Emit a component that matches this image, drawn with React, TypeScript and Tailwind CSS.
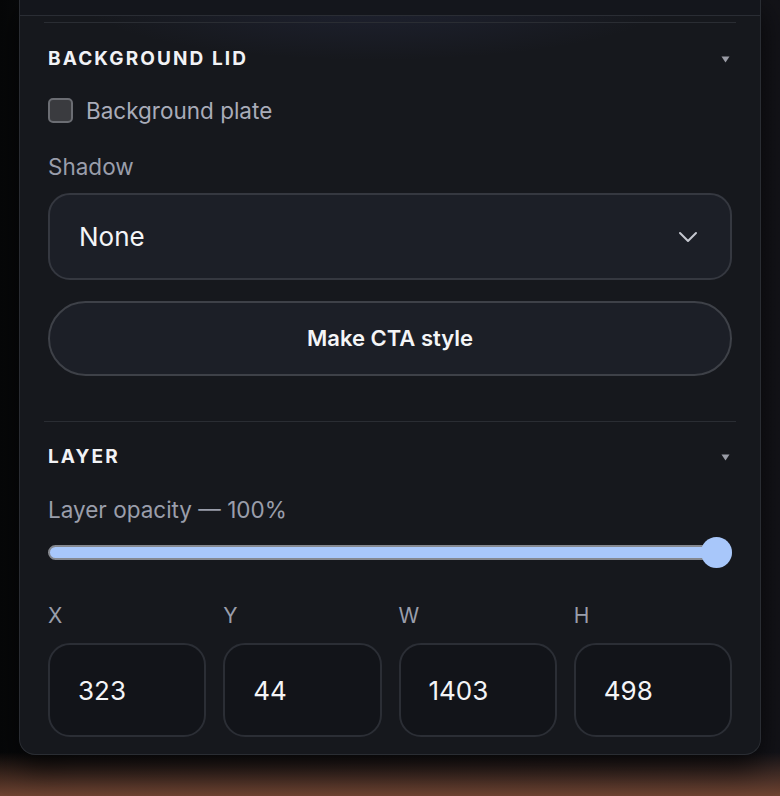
import { ChevronDown } from "lucide-react";

const font = { fontFamily: "Inter, 'Noto Sans', sans-serif" };

function SectionHeader({ title }: { title: string }) {
  return (
    <div className="flex h-[24px] items-center justify-between">
      <h3 className="text-[19px] font-bold uppercase leading-[24px] tracking-[0.11em] text-[#f1f2f5]">
        {title}
      </h3>
      <svg width="9" height="7" viewBox="0 0 9 7" className="mr-[2px]">
        <path d="M0.5 0.5h8L4.5 6.5z" fill="#9a9ca6" />
      </svg>
    </div>
  );
}

function NumberField({ label, value }: { label: string; value: string }) {
  return (
    <div className="flex flex-col">
      <span className="text-[21px] leading-[28px] text-[#9a9eab]">{label}</span>
      <div className="mt-[13px] flex h-[94px] items-center rounded-[22px] border-2 border-[#2b2e35] bg-[#121419] px-[28px] text-[26px] text-[#f4f5f7]">
        {value}
      </div>
    </div>
  );
}

export default function App() {
  return (
    <div
      style={font}
      className="h-[796px] w-[780px] overflow-hidden bg-[linear-gradient(180deg,transparent_0%,transparent_94.5%,#6e4331_100%),linear-gradient(90deg,#060708_0%,#0d0e11_10%,#131318_100%)]"
    >
      <div className="ml-[19px] w-[742px] rounded-b-[16px] border-x border-b border-[#2a2d33] bg-[#16181d] bg-[radial-gradient(ellipse_40%_60px_at_48%_0%,rgba(70,80,140,0.18),transparent)] shadow-[0_12px_30px_rgba(0,0,0,0.7)]">
        <div className="h-[16px] border-b border-[#2a2d34] bg-[#14161c]" />

        <div className="px-[24px] pt-[6px]">
          {/* Background lid */}
          <section className="border-t border-[#2a2d33] px-[4px] pb-[45px] pt-[24px]">
            <SectionHeader title="Background lid" />

            <label className="mt-[27px] flex h-[25px] items-center gap-[13px]">
              <span className="h-[25px] w-[25px] rounded-[5px] border-2 border-[#6b6d73] bg-[#3a3b3f]" />
              <span className="text-[22.5px] text-[#a9acb9]">Background plate</span>
            </label>

            <div className="mt-[30px] text-[22.5px] leading-[28px] text-[#9a9eab]">Shadow</div>

            <div className="mt-[12px] flex h-[87px] items-center justify-between rounded-[22px] border-2 border-[#353840] bg-[#1c1f27] pl-[29px] pr-[26px]">
              <span className="text-[26px] text-[#f4f5f7]">None</span>
              <ChevronDown size={32} strokeWidth={1.5} color="#c5c8d0" />
            </div>

            <button className="mt-[21px] flex h-[75px] w-full items-center justify-center rounded-full border-2 border-[#3e4148] bg-[#1c1f27] text-[22px] font-semibold text-[#f4f5f7]">
              Make CTA style
            </button>
          </section>

          {/* Layer */}
          <section className="border-t border-[#2a2d33] px-[4px] pb-[17px] pt-[23px]">
            <SectionHeader title="Layer" />

            <div className="mt-[27px] text-[22.5px] leading-[28px] text-[#9a9eab]">
              Layer opacity — 100%
            </div>

            <div className="relative mt-[13px] flex h-[31px] items-center">
              <div className="h-[15px] w-full rounded-full border-2 border-[#85888f] bg-[#a8c7fa]" />
              <div className="absolute right-0 top-0 h-[31px] w-[31px] rounded-full bg-[#a8c7fa]" />
            </div>

            <div className="mt-[34px] grid grid-cols-4 gap-[17px]">
              <NumberField label="X" value="323" />
              <NumberField label="Y" value="44" />
              <NumberField label="W" value="1403" />
              <NumberField label="H" value="498" />
            </div>
          </section>
        </div>
      </div>
    </div>
  );
}
